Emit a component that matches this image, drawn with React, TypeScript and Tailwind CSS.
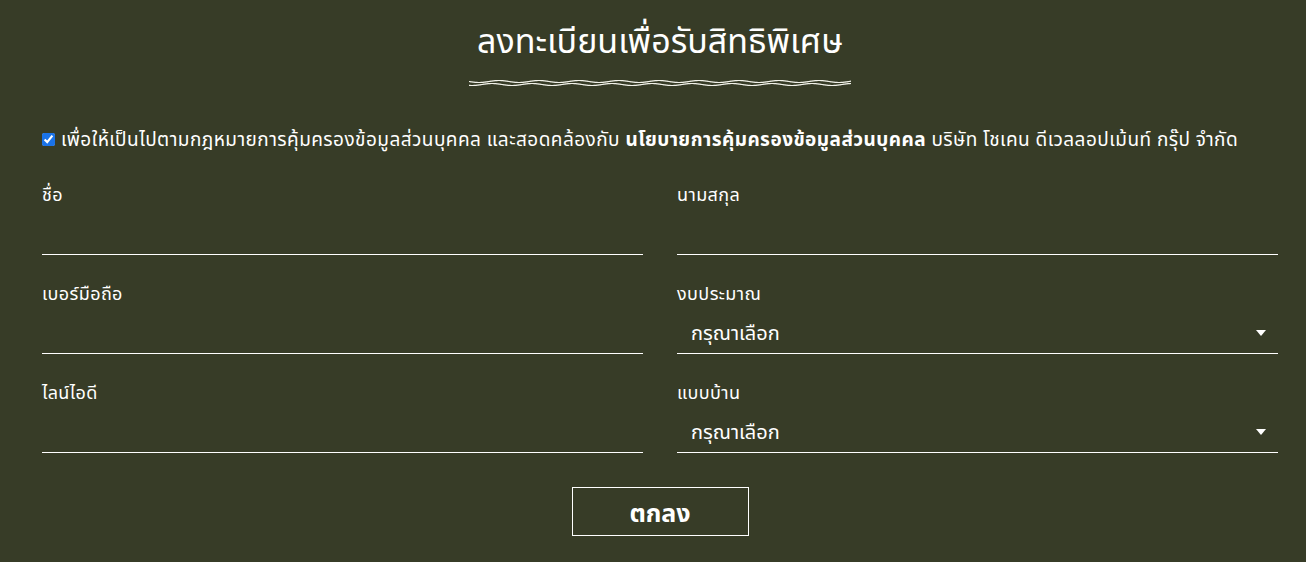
function Wave() {
  // two thin lines, slightly out of phase, like a twisted cord
  const w = 382
  const period = 40
  const a = 1.0
  const pts = (phase: number, base: number) => {
    const out: string[] = []
    for (let x = 0; x <= w; x += 1) {
      const y = base + a * Math.sin((x / period) * 2 * Math.PI + phase)
      out.push(`${x},${y.toFixed(2)}`)
    }
    return out.join(' ')
  }
  return (
    <svg width={w} height={10} viewBox={`0 0 ${w} 10`} className="block">
      <polyline points={pts(0, 3.5)} fill="none" stroke="#f2f2ea" strokeWidth="1.2" />
      <polyline points={pts(1.1, 6.5)} fill="none" stroke="#f2f2ea" strokeWidth="1.2" />
    </svg>
  )
}

function TextField({ label }: { label: string }) {
  return (
    <div className="flex flex-col">
      <label className="text-[18px] leading-[20px] tracking-[0.4px] text-white">{label}</label>
      <input
        type="text"
        className="mt-[3px] h-[48px] w-full border-b border-white bg-transparent text-white outline-none"
      />
    </div>
  )
}

function SelectField({ label }: { label: string }) {
  return (
    <div className="flex flex-col">
      <label className="text-[18px] leading-[20px] tracking-[0.4px] text-white">{label}</label>
      <div className="mt-[3px] flex h-[48px] w-full items-end justify-between border-b border-white pb-[8px] pl-[14px] pr-[10px] text-white">
        <span className="text-[20px] leading-[24px]">กรุณาเลือก</span>
        <svg width="10" height="6" viewBox="0 0 10 6" className="mr-[2px] mb-[9px]">
          <path d="M0 0 L10 0 L5 6 Z" fill="#ffffff" />
        </svg>
      </div>
    </div>
  )
}

export default function App() {
  return (
    <div
      className="min-h-[562px] w-full bg-[#373c27] pl-[42px] pr-[28px] text-white"
      style={{ fontFamily: '"Noto Sans", "Noto Sans Thai", "DejaVu Sans", sans-serif' }}
    >
      <div className="flex flex-col items-center pt-[16px]">
        <h1 className="text-[34px] leading-[48px] font-normal text-white">ลงทะเบียนเพื่อรับสิทธิพิเศษ</h1>
        <div className="mt-[14px]">
          <Wave />
        </div>
      </div>

      <div className="mt-[40px] flex items-center">
        <input type="checkbox" defaultChecked className="h-[13px] w-[13px] accent-[#1a73e8]" />
        <p className="ml-[6px] text-[19px] leading-[22px] tracking-[0.45px] text-white">
          เพื่อให้เป็นไปตามกฎหมายการคุ้มครองข้อมูลส่วนบุคคล และสอดคล้องกับ{' '}
          <span className="font-bold">นโยบายการคุ้มครองข้อมูลส่วนบุคคล</span> บริษัท โชเคน ดีเวลลอปเม้นท์ กรุ๊ป จำกัด
        </p>
      </div>

      <div className="mt-[34px] grid grid-cols-2 gap-x-[34px] gap-y-[28px]">
        <TextField label="ชื่อ" />
        <TextField label="นามสกุล" />
        <TextField label="เบอร์มือถือ" />
        <SelectField label="งบประมาณ" />
        <TextField label="ไลน์ไอดี" />
        <SelectField label="แบบบ้าน" />
      </div>

      <div className="mt-[34px] flex justify-center">
        <button className="h-[49px] w-[177px] border border-white text-[25px] leading-[30px] font-bold text-white">ตกลง</button>
      </div>
    </div>
  )
}
